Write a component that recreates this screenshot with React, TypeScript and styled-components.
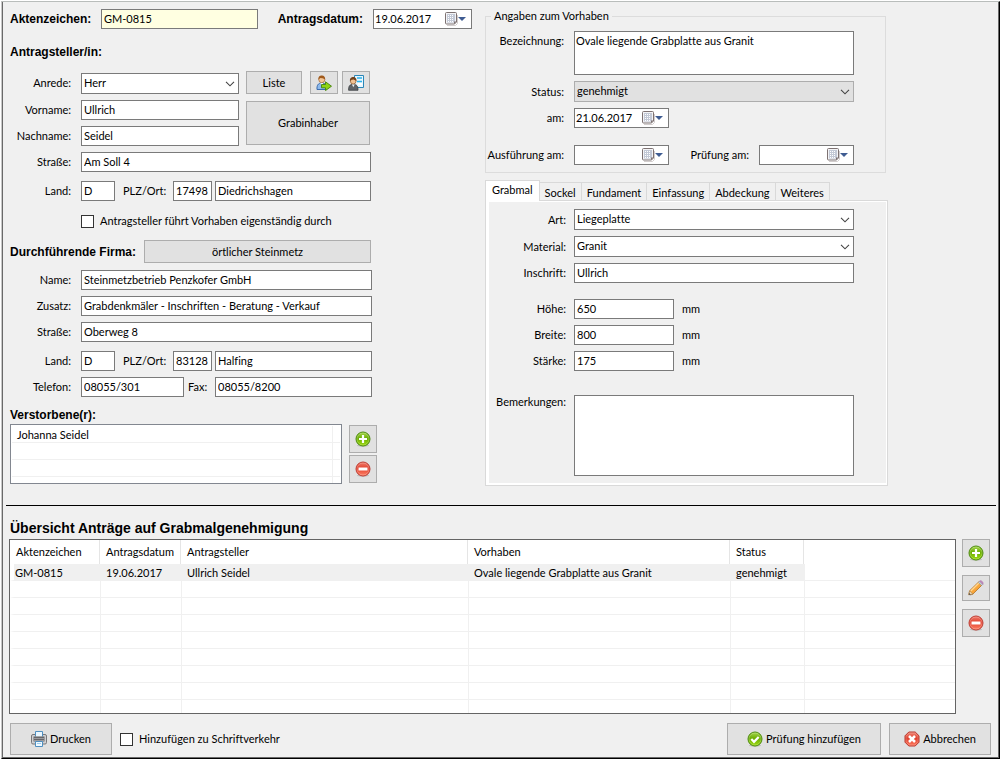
import React from 'react';
import styled, { createGlobalStyle, css } from 'styled-components';

const GlobalStyle = createGlobalStyle`
  *, *::before, *::after { box-sizing: border-box; }
  body { margin: 0; background: #fff; }
  body, button, input, select, textarea {
    font-family: Lato, "Liberation Sans", Arial, sans-serif;
    font-size: 11px;
    font-variant-ligatures: none;
    line-height: 14px;
    color: #000;
  }
`;

const strong = css`
  font-family: "Liberation Sans", Arial, sans-serif;
  font-weight: bold;
`;

const Outer = styled.div`
  display: flex;
  min-height: 100vh;
  padding: 1px 0 0 1px;
  background: #fff;
`;
const Edge = styled.div`
  flex: 1;
  display: flex;
  min-width: 0;
  border: 1px solid #000;
  border-top-color: #b9bdbb;
  border-left-color: #c8c8c8;
`;
const Window = styled.form`
  flex: 1;
  min-width: 0;
  display: flex;
  flex-direction: column;
  padding-bottom: 2px;
  background: #f0f0f0;
  border: solid #696969;
  border-width: 0 1px 1px 1px;
`;

const Upper = styled.div`
  display: grid;
  grid-template-columns: 482px minmax(0, 1fr);
  padding-top: 7px;
`;
const LeftColumn = styled.div`
  padding-left: 7px;
`;
const RightColumn = styled.div`
  padding-right: 110px;
`;

const Row = styled.div<{ $top?: number; $align?: string; $width?: number }>`
  display: flex;
  align-items: ${p => p.$align ?? 'center'};
  margin-top: ${p => p.$top ?? 0}px;
  ${p => p.$width && css`width: ${p.$width}px;`}
`;
const Label = styled.label<{ $width?: number; $gap?: number; $left?: boolean }>`
  flex: none;
  width: ${p => (p.$width ? `${p.$width}px` : 'auto')};
  margin-right: ${p => p.$gap ?? 10}px;
  text-align: ${p => (p.$left ? 'left' : 'right')};
  white-space: nowrap;
`;
const StrongLabel = styled(Label)`
  ${strong}
  font-size: 12px;
`;
const AreaLabel = styled(Label)`
  padding-top: 3px;
`;
const RaisedLabel = styled(Label)`
  padding-bottom: 4px;
`;
const SectionTitle = styled.h2<{ $top?: number; $width?: number }>`
  ${strong}
  flex: none;
  width: ${p => (p.$width ? `${p.$width}px` : 'auto')};
  margin: ${p => p.$top ?? 0}px 0 0;
  font-size: 12px;
  line-height: 14px;
`;

const field = css`
  border: 1px solid #7a7a7a;
  border-radius: 0;
  background: #fff;
  outline: none;
  margin: 0;
`;
const Input = styled.input<{ $width?: number; $tint?: boolean; $gap?: number }>`
  ${field}
  height: 20px;
  padding: 0 2px 2px;
  min-width: 0;
  flex: ${p => (p.$width ? 'none' : '1')};
  width: ${p => (p.$width ? `${p.$width}px` : 'auto')};
  margin-right: ${p => p.$gap ?? 0}px;
  ${p => p.$tint && css`background: #ffffe1;`}
`;
const Area = styled.textarea<{ $height: number }>`
  ${field}
  display: block;
  flex: 1;
  min-width: 0;
  height: ${p => p.$height}px;
  padding: 2px 1px;
  resize: none;
`;
const SelectBox = styled.div<{ $width?: number }>`
  display: grid;
  grid-template-columns: minmax(0, 1fr);
  align-items: center;
  flex: ${p => (p.$width ? 'none' : '1')};
  width: ${p => (p.$width ? `${p.$width}px` : 'auto')};
  > * { grid-area: 1 / 1; }
  > svg { justify-self: end; margin-right: 4px; pointer-events: none; }
`;
const SelectField = styled.select<{ $grey?: boolean }>`
  ${field}
  appearance: none;
  height: 21px;
  padding: 0 20px 1px 2px;
  ${p => p.$grey && css`background: #e1e1e1; border-color: #adadad;`}
`;
const DateBox = styled.div<{ $width: number }>`
  ${field}
  display: flex;
  align-items: center;
  flex: none;
  width: ${p => p.$width}px;
  height: 20px;
`;
const DateText = styled.input`
  flex: 1;
  min-width: 0;
  border: 0;
  padding: 0 1px 1px;
  background: transparent;
  outline: none;
`;
const DateButton = styled.button`
  display: flex;
  flex: none;
  padding: 0;
  margin-right: 5px;
  border: 0;
  background: transparent;
`;

const Button = styled.button<{ $width?: number; $height?: number }>`
  display: flex;
  align-items: center;
  justify-content: center;
  gap: 3px;
  flex: ${p => (p.$width ? 'none' : '1')};
  width: ${p => (p.$width ? `${p.$width}px` : 'auto')};
  height: ${p => (p.$height ? `${p.$height}px` : 'auto')};
  padding: 0;
  border: 1px solid #adadad;
  border-radius: 0;
  background: #e1e1e1;
  white-space: nowrap;
`;
const Check = styled.input`
  appearance: none;
  flex: none;
  width: 13px;
  height: 13px;
  margin: 0 6px 0 0;
  border: 1px solid #333;
  background: #fff;
`;
const NamePair = styled.div`
  display: grid;
  grid-template-columns: 229px 124px;
  column-gap: 7px;
  margin-top: 6px;
`;
const Stack = styled.div<{ $gap: number }>`
  display: flex;
  flex-direction: column;
  gap: ${p => p.$gap}px;
`;
const OwnerCell = styled.div`
  display: flex;
  padding: 1px 0;
`;
const IconPair = styled.div`
  display: flex;
  gap: 4px;
  margin-left: 8px;
`;
const SelectRow = styled(Row)`
  > ${Button} { margin-left: 7px; }
`;
const Indented = styled(Row)`
  padding-left: 71px;
`;

const DeceasedList = styled.ul`
  display: flex;
  flex-direction: column;
  width: 332px;
  height: 60px;
  margin: 0 7px 0 0;
  padding: 1px 1px 0;
  list-style: none;
  background: #fff;
  border: 1px solid #828790;
`;
const DeceasedItem = styled.li<{ $rest?: boolean }>`
  display: flex;
  flex: ${p => (p.$rest ? '1' : 'none')};
  height: ${p => (p.$rest ? 'auto' : '17px')};
  padding-right: 7px;
  border-bottom: ${p => (p.$rest ? '0' : '1px solid #f0f0f0')};
`;
const DeceasedName = styled.span`
  flex: 1;
  padding: 2px 5px 0;
  border-right: 1px solid #f0f0f0;
`;

const Group = styled.fieldset`
  min-width: 0;
  margin: 0 2px 0 0;
  padding: 0 31px 7px 0;
  border: 1px solid #dcdcdc;
`;
const Legend = styled.legend`
  margin-left: 5px;
  padding: 0 3px;
`;
const Tabs = styled.div`
  display: flex;
  align-items: flex-end;
  height: 21px;
  margin: 7px 0 -1px;
`;
const Tab = styled.button<{ $active?: boolean }>`
  height: 19px;
  padding: 2px 5px 0;
  border: solid #d9d9d9;
  border-width: 1px 1px 1px 0;
  background: #f0f0f0;
  white-space: nowrap;
  ${p => p.$active && css`
    height: 21px;
    padding: 0 6px 2px;
    border-width: 1px 1px 0;
    background: #fff;
  `}
`;
const TabPanel = styled.div`
  padding: 1px 1px 2px 3px;
  background: #fff;
  border: 1px solid #d9d9d9;
`;
const PanelBody = styled.div`
  padding: 7px 32px 7px 0;
  background: #f0f0f0;
`;
const Unit = styled.span`
  margin-left: 8px;
`;

const Divider = styled.hr`
  width: auto;
  height: 1px;
  margin: 19px 2px 0 3px;
  border: 0;
  background: #000;
`;
const Lower = styled.section`
  flex: 1;
  display: flex;
  flex-direction: column;
  padding: 13px 7px 0 6px;
`;
const OverviewTitle = styled.h1`
  ${strong}
  margin: 0 0 2px;
  padding-left: 1px;
  font-size: 14px;
  line-height: 18px;
`;
const Overview = styled.div`
  flex: 1;
  display: flex;
  gap: 6px;
  padding-right: 1px;
`;
const TableFrame = styled.div`
  flex: 1;
  display: flex;
  min-width: 0;
  min-height: 175px;
  border: 1px solid #646464;
  background: #fff;
`;
const Table = styled.table`
  width: 100%;
  table-layout: fixed;
  border-collapse: separate;
  border-spacing: 0;
  text-align: left;
  white-space: nowrap;
  th {
    height: 24px;
    padding: 0 6px;
    font-weight: normal;
    border-right: 1px solid #e5e5e5;
  }
  th:last-child { border-right: 0; }
  td {
    height: 17px;
    padding: 2px 5px 0;
    border-bottom: 1px solid #f0f0f0;
    border-left: 1px solid #f0f0f0;
  }
  td:first-child { border-left: 4px solid #fff; padding-left: 1px; }
  tr:last-child td { height: auto; border-bottom: 0; }
`;
const DataRow = styled.tr<{ $selected?: boolean }>`
  ${p => p.$selected && css`td:not(:last-child) { background: #f0f0f0; }`}
`;
const SideButtons = styled.div`
  display: flex;
  flex-direction: column;
  gap: 8px;
`;
const Footer = styled.div`
  display: flex;
  align-items: center;
  gap: 8px;
  margin-top: 9px;
  padding-left: 1px;
`;
const CheckLabel = styled.label`
  display: flex;
  align-items: center;
  white-space: nowrap;
`;
const Spacer = styled.div`
  flex: 1;
`;

const Chevron = () => (
  <svg width="10" height="6" viewBox="0 0 10 6" fill="none" stroke="#444" strokeWidth="1.1">
    <path d="M1 .8 5 4.8 9 .8" />
  </svg>
);
const Calendar = () => (
  <svg width="21" height="14" viewBox="0 0 21 14">
    <path d="M2 13.500h8.500l2-2V3" fill="none" stroke="#d2cdcd" />
    <path d="M1.500.5h9a1 1 0 0 1 1 1V10l-2 2h-8a1 1 0 0 1-1-1v-9.500a1 1 0 0 1 1-1z" fill="#f4f4f6" stroke="#7d7272" />
    <path d="M2 2h8v8.500H2z" fill="#c3c9d6" />
    <path d="M3 3.500h6M3 5.500h6M3 7.500h6M3 9.500h6" stroke="#fff" strokeDasharray="1 1" />
    <path d="m11.500 9.500-2.500 2.700V9.500z" fill="#7d7272" />
    <path d="M13 5h8l-4 4z" fill="#3f5c92" />
  </svg>
);
const Disc = ({ kind }: { kind: 'add' | 'remove' | 'ok' }) => {
  const red = kind === 'remove';
  const id = `disc-${kind}`;
  return (
    <svg width="16" height="16" viewBox="0 0 16 16">
      <defs>
        <linearGradient id={id} x1="0" y1="0" x2="0" y2="1">
          <stop offset="0" stopColor={red ? '#f08070' : '#a8d850'} />
          <stop offset=".45" stopColor={red ? '#e2402e' : '#6cae04'} />
          <stop offset="1" stopColor={red ? '#ff8468' : '#9fdc10'} />
        </linearGradient>
      </defs>
      <ellipse cx="8" cy="14.400" rx="6" ry="1.300" fill="#bdbdbd" />
      <circle cx="8" cy="8" r="7" fill={`url(#${id})`} stroke={red ? '#bd3a30' : '#4b8a0c'} />
      <circle cx="8" cy="8" r="6" fill="none" stroke="#fff" strokeOpacity=".2" />
      {kind === 'add' && <path d="M8 4v8M4 8h8" stroke="#fff" strokeWidth="2.200" />}
      {kind === 'remove' && <path d="M3.500 8h9" stroke="#fff" strokeWidth="3" />}
      {kind === 'ok' && <path d="m4.300 8 2.700 2.800 4.700-4.800" fill="none" stroke="#fff" strokeWidth="2.200" />}
    </svg>
  );
};
const Cancel = () => (
  <svg width="16" height="16" viewBox="0 0 16 16">
    <defs>
      <linearGradient id="cancel" x1="0" y1="0" x2="0" y2="1">
        <stop offset="0" stopColor="#f08878" />
        <stop offset=".45" stopColor="#e0412f" />
        <stop offset="1" stopColor="#ff7c60" />
      </linearGradient>
    </defs>
    <path d="M4.800 1h6.400L15 4.800v6.400L11.200 15H4.800L1 11.200V4.800z" fill="url(#cancel)" stroke="#b8352b" strokeLinejoin="round" />
    <path d="M5.200 2h5.600L14 5.200v5.600L10.800 14H5.200L2 10.800V5.200z" fill="none" stroke="#fff" strokeOpacity=".2" />
    <path d="m5 5 6 6M11 5l-6 6" stroke="#fff" strokeWidth="2.500" />
  </svg>
);
const Pencil = () => (
  <svg width="16" height="16" viewBox="0 0 16 16">
    <path d="M2 15.300 5 14l9-9" fill="none" stroke="#b5b5b5" strokeWidth="1" />
    <path d="M.8 14.700 1.600 10.800 10.600 2l3.200 3.200-9 8.900z" fill="#f9a63a" stroke="#b57324" strokeWidth=".8" />
    <path d="m2.800 11 8.400-8.300" stroke="#ffd793" strokeWidth="1.300" />
    <path d="M.8 14.700 1.600 10.800l3.200 3.300z" fill="#f3dcb4" stroke="#9a7b50" strokeWidth=".6" />
    <path d="m.8 14.800.4-1.800 1.500 1.400z" fill="#444" />
    <path d="m10.300 2.400 1.400-1.300 3.100 3.200-1.300 1.300z" fill="#c8ced2" stroke="#7f8b91" strokeWidth=".5" />
    <path d="M11.700 1.100c1.300-1.400 4.300 1.400 3.100 3.200z" fill="#c98fc4" stroke="#a56da8" strokeWidth=".6" />
  </svg>
);
const Printer = () => (
  <svg width="16" height="16" viewBox="0 0 16 16">
    <rect x=".5" y="3.500" width="15" height="9.500" rx="1.500" fill="#d0d0d2" stroke="#77777a" />
    <path d="M4.500 5.500v-5h7v5" fill="#e9f6ff" stroke="#4f8fc0" />
    <path d="M2.500 5.500h11v5h-11z" fill="#66666a" />
    <path d="M3 7.500h10M3 9.500h10" stroke="#9a9a9e" />
    <path d="M4.500 10.500h7v5h-7z" fill="#edf8ff" stroke="#4f8fc0" />
    <path d="M6 12.500h4" stroke="#9ccbec" />
  </svg>
);
const UserGo = () => (
  <svg width="16" height="16" viewBox="0 0 16 16">
    <path d="M1 14.500c-.3-4 1-6.500 4.800-6.500s5 2.500 4.700 6.500z" fill="#8db9ec" stroke="#2e62a8" strokeWidth=".9" />
    <path d="m4.300 8 1.500 2.500L7.300 8z" fill="#fff" />
    <circle cx="5.800" cy="4.700" r="3" fill="#f3c698" stroke="#9a5b22" strokeWidth=".6" />
    <path d="M2.500 5C1.800 1.500 4 .3 6 .4s3.600 1.500 3.100 4.600C8.500 3 6 3.700 4.500 3 3.500 3.200 3 4 2.500 5z" fill="#a05a1c" />
    <path d="M5.500 9.500h4V6.800l6 4.400-6 4.400v-2.800h-4z" fill="#8fd414" stroke="#44820c" strokeWidth=".9" />
  </svg>
);
const UserCard = () => (
  <svg width="16" height="16" viewBox="0 0 16 16">
    <path d="M6.500.5h9v12h-9z" fill="#e8f7ff" stroke="#2b87b8" />
    <path d="M9 3h5M9 6.500h5" stroke="#2bb1ea" strokeWidth="1.600" />
    <path d="M10 9h4" stroke="#fff" strokeWidth="2" />
    <path d="M.6 15.300c-.2-4 1-6 4.600-6s5 2 4.800 6z" fill="#606468" stroke="#34373a" strokeWidth=".7" />
    <path d="m3.800 9.300 1.500 3 1.500-3z" fill="#e8eef2" />
    <circle cx="5.200" cy="6.200" r="2.800" fill="#f0c193" stroke="#7d4718" strokeWidth=".6" />
    <path d="M2 6.500C1.500 3 3.500 2 5.400 2s3.600 1.500 3 4.500C8 4.600 5.500 5 4.200 4.500c-1 .2-1.700 1-2.200 2z" fill="#71401a" />
  </svg>
);

type TextProps = { id: string; label: string; value: string; top?: number };

const AddressLine = ({ id, label, value, top = 6, wide }: TextProps & { wide?: boolean }) => (
  <Row $top={top} $width={wide ? 362 : 361}>
    <Label htmlFor={id} $width={61}>{label}</Label>
    <Input id={id} defaultValue={value} />
  </Row>
);
const TownLine = ({ id, zip, town, wide }: { id: string; zip: string; town: string; wide?: boolean }) => (
  <Row $top={9} $width={wide ? 362 : 361}>
    <Label htmlFor={`${id}-land`} $width={61}>Land:</Label>
    <Input id={`${id}-land`} defaultValue="D" $width={34} $gap={8} />
    <Label htmlFor={`${id}-plz`} $width={42} $gap={8}>PLZ/Ort:</Label>
    <Input id={`${id}-plz`} defaultValue={zip} $width={39} $gap={3} />
    <Input aria-label="Ort" defaultValue={town} />
  </Row>
);
const DateField = ({ id, value, width = 95 }: { id: string; value: string; width?: number }) => (
  <DateBox $width={width}>
    <DateText id={id} defaultValue={value} />
    <DateButton type="button" aria-label="Kalender"><Calendar /></DateButton>
  </DateBox>
);
const SelectInput = ({ id, value, width, grey }: { id: string; value: string; width?: number; grey?: boolean }) => (
  <SelectBox $width={width}>
    <SelectField id={id} $grey={grey}><option>{value}</option></SelectField>
    <Chevron />
  </SelectBox>
);
const Measure = ({ id, label, value, top = 6 }: TextProps) => (
  <Row $top={top}>
    <Label htmlFor={id} $width={77} $gap={8}>{label}</Label>
    <Input id={id} defaultValue={value} $width={100} />
    <Unit>mm</Unit>
  </Row>
);

const tabs = ['Grabmal', 'Sockel', 'Fundament', 'Einfassung', 'Abdeckung', 'Weiteres'];
const columns = ['Aktenzeichen', 'Antragsdatum', 'Antragsteller', 'Vorhaben', 'Status', ''];
const widths = [90, 81, 287, 262, 74];
const application = ['GM-0815', '19.06.2017', 'Ullrich Seidel', 'Ovale liegende Grabplatte aus Granit', 'genehmigt', ''];

export default function App() {
  return (
    <Outer>
      <GlobalStyle />
      <Edge>
        <Window onSubmit={e => e.preventDefault()}>
          <Upper>
            <LeftColumn>
              <Row>
                <StrongLabel htmlFor="akte" $width={91} $gap={0} $left>Aktenzeichen:</StrongLabel>
                <Input id="akte" defaultValue="GM-0815" $width={157} $tint />
                <StrongLabel htmlFor="datum" $width={105}>Antragsdatum:</StrongLabel>
                <DateField id="datum" value="19.06.2017" width={99} />
              </Row>
              <SectionTitle $top={16}>Antragsteller/in:</SectionTitle>
              <SelectRow $top={12} $align="flex-end">
                <RaisedLabel htmlFor="anrede" $width={61}>Anrede:</RaisedLabel>
                <SelectInput id="anrede" value="Herr" width={158} />
                <Button type="button" $width={56} $height={23}>Liste</Button>
                <IconPair>
                  <Button type="button" aria-label="Person übernehmen" $width={28} $height={23}><UserGo /></Button>
                  <Button type="button" aria-label="Kontaktkarte" $width={28} $height={23}><UserCard /></Button>
                </IconPair>
              </SelectRow>
              <NamePair>
                <Stack $gap={6}>
                  <Row>
                    <Label htmlFor="vorname" $width={61}>Vorname:</Label>
                    <Input id="vorname" defaultValue="Ullrich" />
                  </Row>
                  <Row>
                    <Label htmlFor="nachname" $width={61}>Nachname:</Label>
                    <Input id="nachname" defaultValue="Seidel" />
                  </Row>
                </Stack>
                <OwnerCell><Button type="button">Grabinhaber</Button></OwnerCell>
              </NamePair>
              <AddressLine id="strasse" label="Straße:" value="Am Soll 4" />
              <TownLine id="antragsteller" zip="17498" town="Diedrichshagen" />
              <Indented $top={13}>
                <CheckLabel><Check type="checkbox" />Antragsteller führt Vorhaben eigenständig durch</CheckLabel>
              </Indented>
              <Row $top={12} $width={361}>
                <SectionTitle $width={134}>Durchführende Firma:</SectionTitle>
                <Button type="button" $height={23}>örtlicher Steinmetz</Button>
              </Row>
              <AddressLine id="firma" label="Name:" value="Steinmetzbetrieb Penzkofer GmbH" top={7} wide />
              <AddressLine id="zusatz" label="Zusatz:" value="Grabdenkmäler - Inschriften - Beratung - Verkauf" wide />
              <AddressLine id="firmastrasse" label="Straße:" value="Oberweg 8" wide />
              <TownLine id="firma" zip="83128" town="Halfing" wide />
              <Row $top={6} $width={362}>
                <Label htmlFor="telefon" $width={61}>Telefon:</Label>
                <Input id="telefon" defaultValue="08055/301" $width={103} $gap={4} />
                <Label htmlFor="fax" $width={27} $gap={0} $left>Fax:</Label>
                <Input id="fax" defaultValue="08055/8200" />
              </Row>
              <SectionTitle $top={11}>Verstorbene(r):</SectionTitle>
              <Row $top={2}>
                <DeceasedList>
                  <DeceasedItem><DeceasedName>Johanna Seidel</DeceasedName></DeceasedItem>
                  <DeceasedItem><DeceasedName /></DeceasedItem>
                  <DeceasedItem><DeceasedName /></DeceasedItem>
                  <DeceasedItem $rest><DeceasedName /></DeceasedItem>
                </DeceasedList>
                <Stack $gap={2}>
                  <Button type="button" aria-label="Verstorbenen hinzufügen" $height={28} $width={28}><Disc kind="add" /></Button>
                  <Button type="button" aria-label="Verstorbenen entfernen" $height={28} $width={28}><Disc kind="remove" /></Button>
                </Stack>
              </Row>
            </LeftColumn>

            <RightColumn>
              <Group>
                <Legend>Angaben zum Vorhaben</Legend>
                <Row $top={8} $align="flex-start">
                  <AreaLabel htmlFor="bezeichnung" $width={78}>Bezeichnung:</AreaLabel>
                  <Area id="bezeichnung" $height={44} defaultValue="Ovale liegende Grabplatte aus Granit" />
                </Row>
                <Row $top={6}>
                  <Label htmlFor="status" $width={78}>Status:</Label>
                  <SelectInput id="status" value="genehmigt" grey />
                </Row>
                <Row $top={6}>
                  <Label htmlFor="am" $width={78}>am:</Label>
                  <DateField id="am" value="21.06.2017" />
                </Row>
                <Row $top={17}>
                  <Label htmlFor="ausfuehrung" $width={78}>Ausführung am:</Label>
                  <DateField id="ausfuehrung" value="" />
                  <Spacer />
                  <Label htmlFor="pruefung">Prüfung am:</Label>
                  <DateField id="pruefung" value="" />
                </Row>
              </Group>
              <Tabs role="tablist">
                {tabs.map((t, i) => (
                  <Tab key={t} type="button" role="tab" aria-selected={i === 0} $active={i === 0}>{t}</Tab>
                ))}
              </Tabs>
              <TabPanel role="tabpanel">
                <PanelBody>
                  <Row>
                    <Label htmlFor="art" $width={77} $gap={8}>Art:</Label>
                    <SelectInput id="art" value="Liegeplatte" />
                  </Row>
                  <Row $top={6}>
                    <Label htmlFor="material" $width={77} $gap={8}>Material:</Label>
                    <SelectInput id="material" value="Granit" />
                  </Row>
                  <Row $top={6}>
                    <Label htmlFor="inschrift" $width={77} $gap={8}>Inschrift:</Label>
                    <Input id="inschrift" defaultValue="Ullrich" />
                  </Row>
                  <Measure id="hoehe" label="Höhe:" value="650" top={16} />
                  <Measure id="breite" label="Breite:" value="800" />
                  <Measure id="staerke" label="Stärke:" value="175" />
                  <Row $top={24} $align="flex-start">
                    <Label htmlFor="bemerkungen" $width={77} $gap={8}>Bemerkungen:</Label>
                    <Area id="bemerkungen" $height={81} />
                  </Row>
                </PanelBody>
              </TabPanel>
            </RightColumn>
          </Upper>

          <Divider />

          <Lower>
            <OverviewTitle>Übersicht Anträge auf Grabmalgenehmigung</OverviewTitle>
            <Overview>
              <TableFrame>
                <Table>
                  <colgroup>
                    {widths.map((w, i) => <col key={i} width={w} />)}
                    <col />
                  </colgroup>
                  <thead>
                    <tr>{columns.map(c => <th key={c}>{c}</th>)}</tr>
                  </thead>
                  <tbody>
                    <DataRow $selected>{application.map((c, i) => <td key={i}>{c}</td>)}</DataRow>
                    {Array.from({ length: 8 }, (_, r) => (
                      <DataRow key={r}>{columns.map(c => <td key={c} />)}</DataRow>
                    ))}
                  </tbody>
                </Table>
              </TableFrame>
              <SideButtons>
                <Button type="button" aria-label="Antrag hinzufügen" $width={28} $height={28}><Disc kind="add" /></Button>
                <Button type="button" aria-label="Antrag bearbeiten" $width={28} $height={26}><Pencil /></Button>
                <Button type="button" aria-label="Antrag entfernen" $width={28} $height={28}><Disc kind="remove" /></Button>
              </SideButtons>
            </Overview>
            <Footer>
              <Button type="button" $width={102} $height={32}><Printer />Drucken</Button>
              <CheckLabel><Check type="checkbox" />Hinzufügen zu Schriftverkehr</CheckLabel>
              <Spacer />
              <Button type="button" $width={154} $height={32}><Disc kind="ok" />Prüfung hinzufügen</Button>
              <Button type="button" $width={102} $height={32}><Cancel />Abbrechen</Button>
            </Footer>
          </Lower>
        </Window>
      </Edge>
    </Outer>
  );
}
